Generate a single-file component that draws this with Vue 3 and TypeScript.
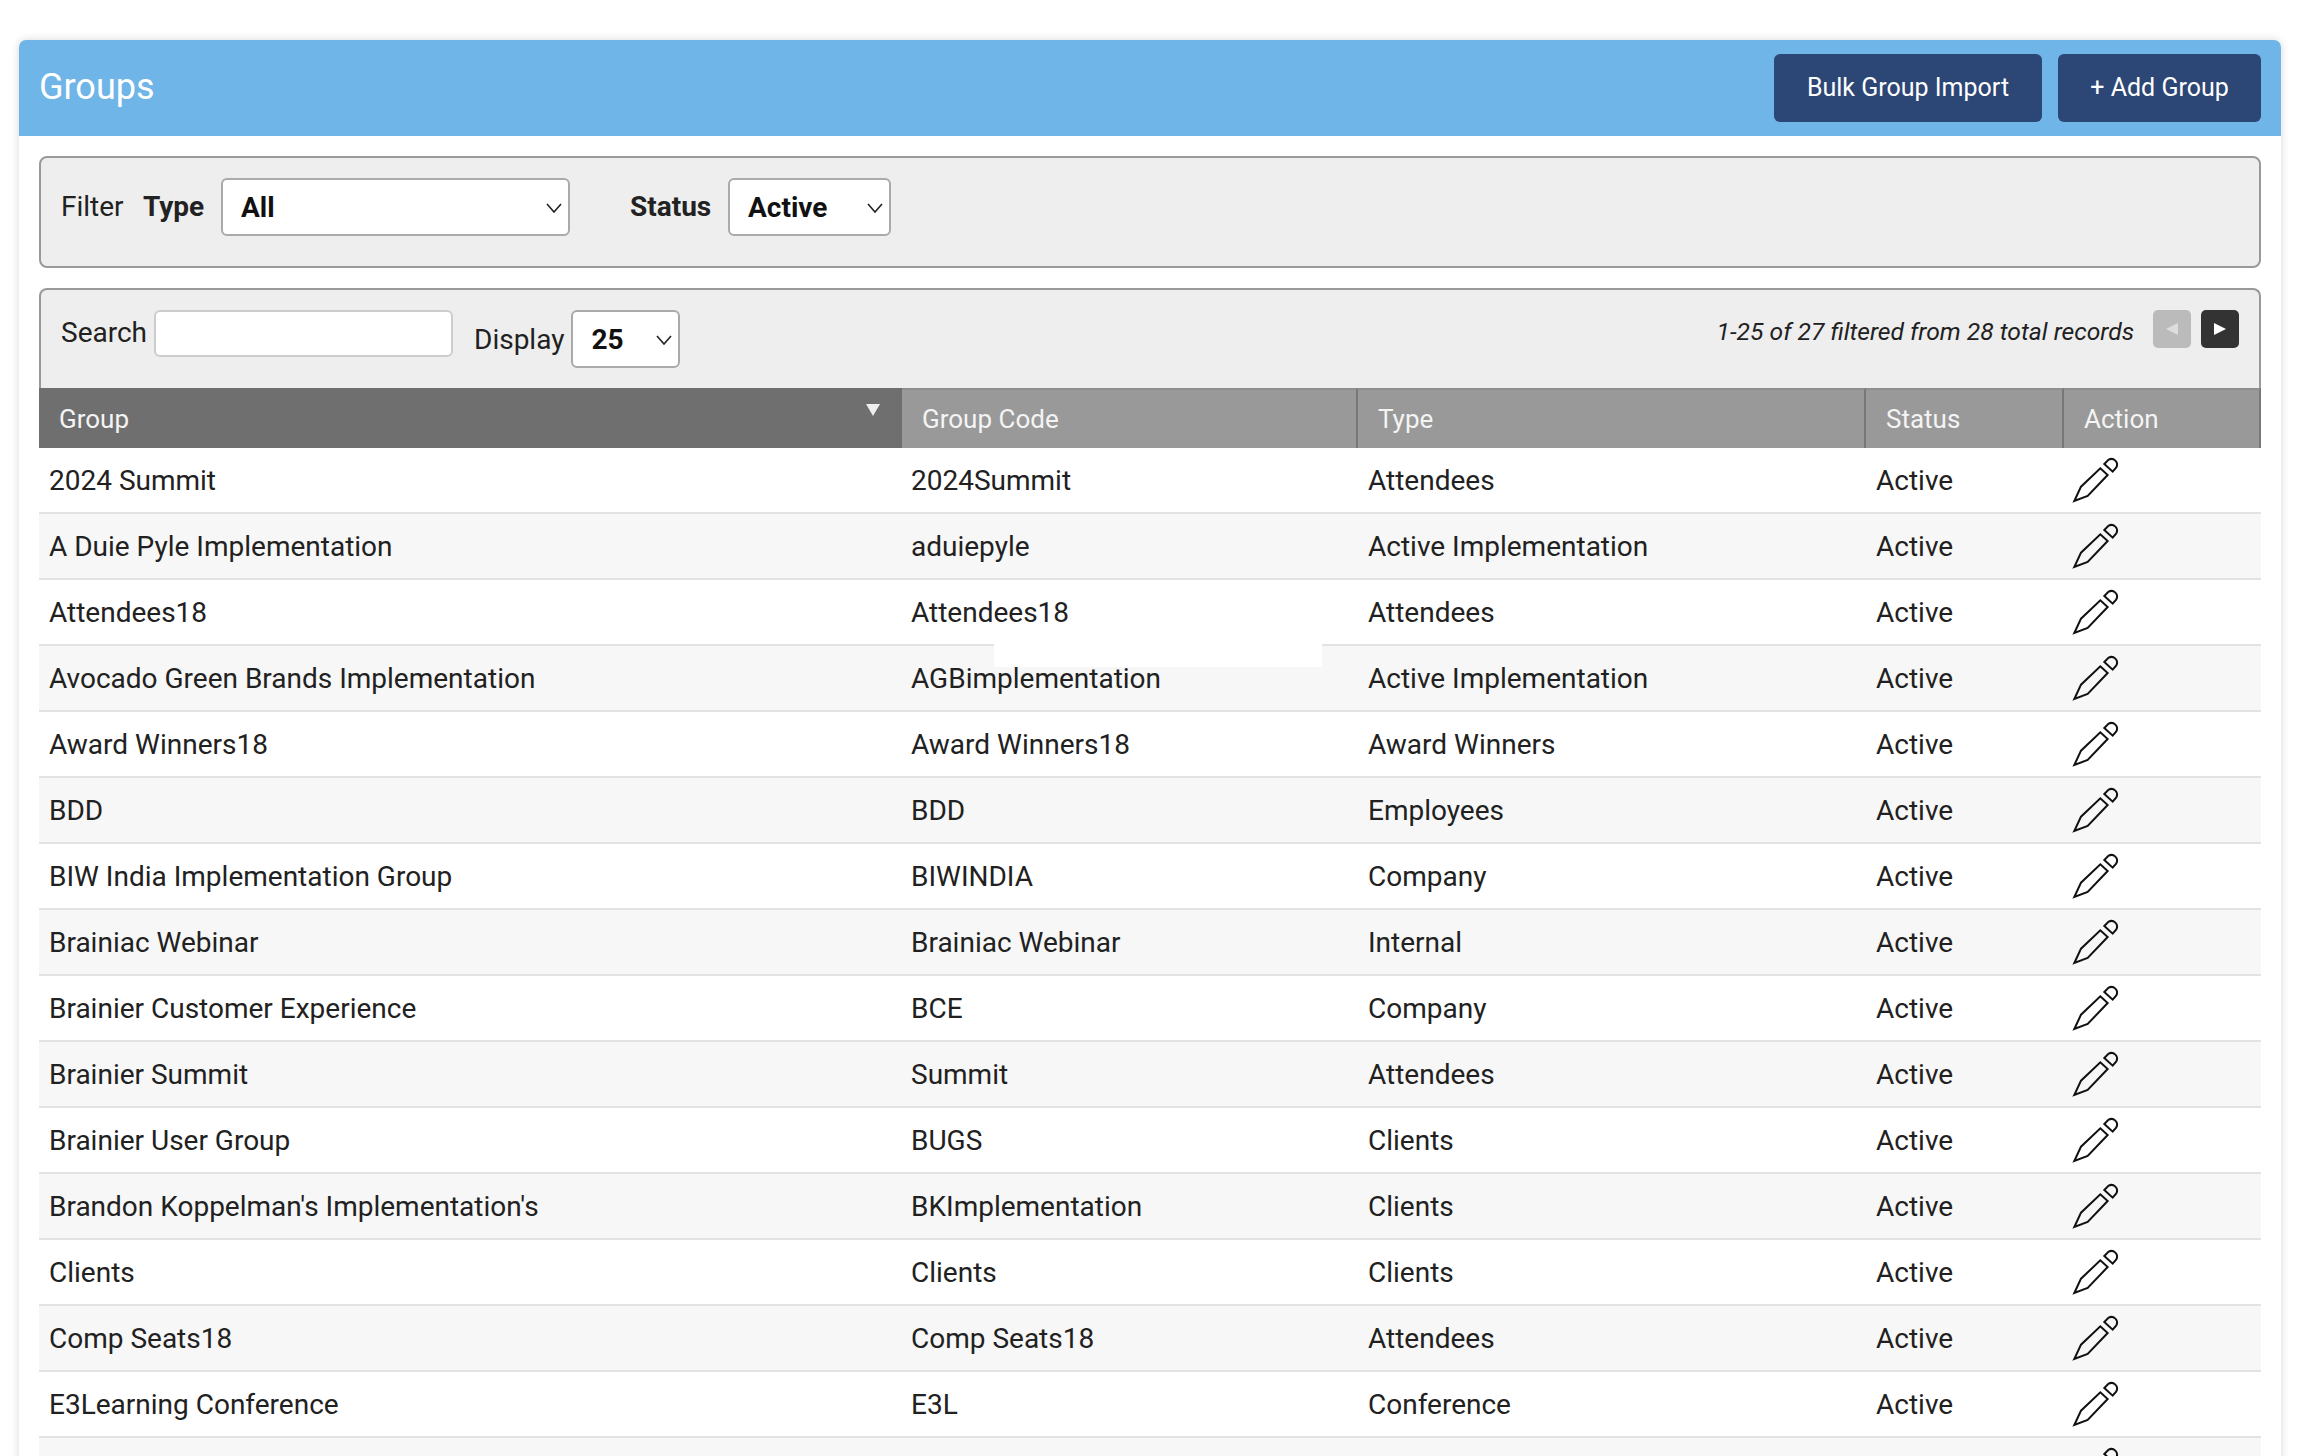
<template>
  <div class="page">
    <section class="card">
      <header class="card-head">
        <h1 class="title">Groups</h1>
        <div class="head-actions">
          <button class="btn btn-bulk" type="button">Bulk Group Import</button>
          <button class="btn btn-add" type="button">+ Add Group</button>
        </div>
      </header>

      <div class="card-body">
        <!-- filter -->
        <div class="panel filter">
          <span class="filter-label">Filter</span>
          <label class="bold-label type-label" for="type">Type</label>
          <div class="select-wrap type-select">
            <select id="type"><option>All</option></select>
            <svg class="chev" viewBox="0 0 16 10"><path d="M1 1l7 8 7-8" /></svg>
          </div>
          <label class="bold-label status-label" for="status">Status</label>
          <div class="select-wrap status-select">
            <select id="status"><option>Active</option></select>
            <svg class="chev" viewBox="0 0 16 10"><path d="M1 1l7 8 7-8" /></svg>
          </div>
        </div>

        <!-- toolbar -->
        <div class="panel toolbar">
          <div class="search">
            <label for="search">Search</label>
            <input id="search" type="text" />
          </div>
          <div class="display">
            <label for="display">Display</label>
            <div class="select-wrap display-select">
              <select id="display"><option>25</option></select>
              <svg class="chev" viewBox="0 0 16 10"><path d="M1 1l7 8 7-8" /></svg>
            </div>
          </div>
          <div class="pager">
            <em class="records">1-25 of 27 filtered from 28 total records</em>
            <button class="page-btn prev" type="button" aria-label="Previous">
              <svg viewBox="0 0 14 14"><path d="M13 1v12L1 7z" /></svg>
            </button>
            <button class="page-btn next" type="button" aria-label="Next">
              <svg viewBox="0 0 14 14"><path d="M1 1v12l12-6z" /></svg>
            </button>
          </div>
        </div>

        <!-- table -->
        <div class="table">
          <div class="thead">
            <div class="th sorted">
              Group
              <svg class="sort" viewBox="0 0 14 12"><path d="M0 0h14L7 12z" /></svg>
            </div>
            <div class="th">Group Code</div>
            <div class="th">Type</div>
            <div class="th">Status</div>
            <div class="th">Action</div>
          </div>
          <div v-for="(row, i) in rows" :key="i" class="tr">
            <div v-if="i === 3" class="patch" />
            <div class="td">{{ row[0] }}</div>
            <div class="td code">{{ row[1] }}</div>
            <div class="td">{{ row[2] }}</div>
            <div class="td">{{ row[3] }}</div>
            <div class="td action">
              <svg class="pencil" viewBox="0 0 150 150">
                <path d="M10 138L30 95L88 40L110 60L50 123Z" />
                <path d="M100 27L125 50L136 37A17 17 0 0 0 113 14Z" />
              </svg>
            </div>
          </div>
        </div>
      </div>
    </section>
  </div>
</template>

<script setup lang="ts">
const rows: string[][] = [
  ['2024 Summit', '2024Summit', 'Attendees', 'Active'],
  ['A Duie Pyle Implementation', 'aduiepyle', 'Active Implementation', 'Active'],
  ['Attendees18', 'Attendees18', 'Attendees', 'Active'],
  ['Avocado Green Brands Implementation', 'AGBimplementation', 'Active Implementation', 'Active'],
  ['Award Winners18', 'Award Winners18', 'Award Winners', 'Active'],
  ['BDD', 'BDD', 'Employees', 'Active'],
  ['BIW India Implementation Group', 'BIWINDIA', 'Company', 'Active'],
  ['Brainiac Webinar', 'Brainiac Webinar', 'Internal', 'Active'],
  ['Brainier Customer Experience', 'BCE', 'Company', 'Active'],
  ['Brainier Summit', 'Summit', 'Attendees', 'Active'],
  ['Brainier User Group', 'BUGS', 'Clients', 'Active'],
  ["Brandon Koppelman's Implementation's", 'BKImplementation', 'Clients', 'Active'],
  ['Clients', 'Clients', 'Clients', 'Active'],
  ['Comp Seats18', 'Comp Seats18', 'Attendees', 'Active'],
  ['E3Learning Conference', 'E3L', 'Conference', 'Active'],
  ['', '', '', ''],
]
</script>

<style>
html,
body {
  margin: 0;
  height: 100%;
  overflow: hidden;
  background: #fff;
}
</style>

<style scoped>
.page {
  box-sizing: border-box;
  height: 1456px;
  overflow: hidden;
  padding: 40px 35px 0 19px;
  font-family: Roboto, "Liberation Sans", sans-serif;
  font-size: 28px;
  color: #212121;
}

.card {
  background: #fff;
  border-radius: 7px 7px 0 0;
  box-shadow: 0 0 8px rgba(0, 0, 0, 0.16);
  min-height: 1500px;
}

.card-head {
  display: flex;
  align-items: center;
  justify-content: space-between;
  height: 96px;
  padding: 0 20px;
  background: #6fb5e7;
  border-radius: 7px 7px 0 0;
}

.title {
  margin: -3px 0 0;
  font-size: 36px;
  font-weight: 400;
  color: #fff;
}

.head-actions {
  display: flex;
  gap: 16px;
}

.btn {
  height: 68px;
  border: 0;
  border-radius: 6px;
  background: #2c4675;
  color: #fff;
  font: inherit;
  font-size: 25px;
  padding: 0 0 2px;
}

.btn-bulk {
  width: 268px;
}

.btn-add {
  width: 203px;
}

.card-body {
  padding: 20px 20px 0;
}

.panel {
  box-sizing: border-box;
  background: #eee;
  border: 2px solid #999;
  border-radius: 8px;
}

.filter {
  display: flex;
  align-items: flex-start;
  height: 112px;
  padding: 20px 20px 0;
  margin-bottom: 20px;
}

.filter-label,
.bold-label {
  line-height: 58px;
}

.filter-label {
  width: 82px;
}

.bold-label {
  font-weight: 700;
  color: #222;
}

.type-label {
  width: 78px;
}

.status-label {
  margin-left: 60px;
  width: 98px;
}

.select-wrap {
  position: relative;
  box-sizing: border-box;
  background: #fff;
  border: 2px solid #aaa;
  border-radius: 6px;
  height: 58px;
}

.select-wrap select {
  appearance: none;
  width: 100%;
  height: 100%;
  border: 0;
  outline: 0;
  background: transparent;
  padding: 0 0 0 18px;
  font: inherit;
  font-weight: 700;
  color: #111;
}

.chev {
  position: absolute;
  top: 23px;
  right: 6px;
  width: 16px;
  height: 10px;
  fill: none;
  stroke: #222;
  stroke-width: 1.6;
  pointer-events: none;
}

.type-select {
  width: 349px;
}

.status-select {
  width: 163px;
}

.toolbar {
  display: flex;
  align-items: flex-start;
  height: 100px;
  padding: 20px 20px 0;
  border-bottom: 0;
  border-radius: 8px 8px 0 0;
}

.search {
  display: flex;
  align-items: center;
  height: 47px;
}

.search label {
  margin-top: -3px;
}

.search input {
  box-sizing: border-box;
  width: 299px;
  height: 47px;
  margin-left: 7px;
  background: #fff;
  border: 2px solid #ccc;
  border-radius: 6px;
  outline: 0;
}

.display {
  display: flex;
  align-items: center;
  margin-left: 21px;
}

.display-select {
  width: 109px;
  margin-left: 7px;
}

.pager {
  display: flex;
  align-items: center;
  margin-left: auto;
  height: 38px;
}

.records {
  font-size: 24.65px;
  margin-right: 19px;
  padding-top: 5px;
}

.page-btn {
  width: 38px;
  height: 38px;
  padding: 0;
  border: 0;
  border-radius: 5px;
  display: flex;
  align-items: center;
  justify-content: center;
}

.page-btn svg {
  width: 14px;
  height: 14px;
  fill: #fff;
}

.prev {
  background: #bbb;
  margin-right: 10px;
}

.prev svg {
  fill: #ddd;
}

.next {
  background: #333;
}

.thead,
.tr {
  display: grid;
  grid-template-columns: 863px 456px 508px 198px 197px;
}

.thead {
  height: 60px;
  background: #999;
  color: #fff;
  font-size: 26px;
}

.th {
  position: relative;
  display: flex;
  align-items: center;
  box-sizing: border-box;
  padding-left: 20px;
  border-top: 2px solid #8f8f8f;
  border-right: 2px solid #777;
  color: #f4f4f4;
}

.th.sorted {
  background: #6f6f6f;
  border-top-color: #6f6f6f;
  border-right: 0;
}

.sort {
  position: absolute;
  top: 14px;
  right: 22px;
  width: 14px;
  height: 12px;
  fill: #eee;
}

.tr {
  position: relative;
  box-sizing: border-box;
  height: 66px;
  border-bottom: 2px solid #e3e3e3;
  background: #fff;
}

.tr:nth-child(odd) {
  background: #f7f7f7;
}

.td {
  position: relative;
  display: flex;
  align-items: center;
  padding-left: 10px;
}

.td.code {
  padding-left: 9px;
}

.td.action {
  padding-left: 7px;
}

.pencil {
  width: 50px;
  height: 50px;
  fill: none;
  stroke: #111;
  stroke-width: 6;
  stroke-linejoin: miter;
}

/* stray white block sitting across the row border */
.patch {
  position: absolute;
  left: 955px;
  top: -4px;
  width: 328px;
  height: 25px;
  background: #fff;
}
</style>
